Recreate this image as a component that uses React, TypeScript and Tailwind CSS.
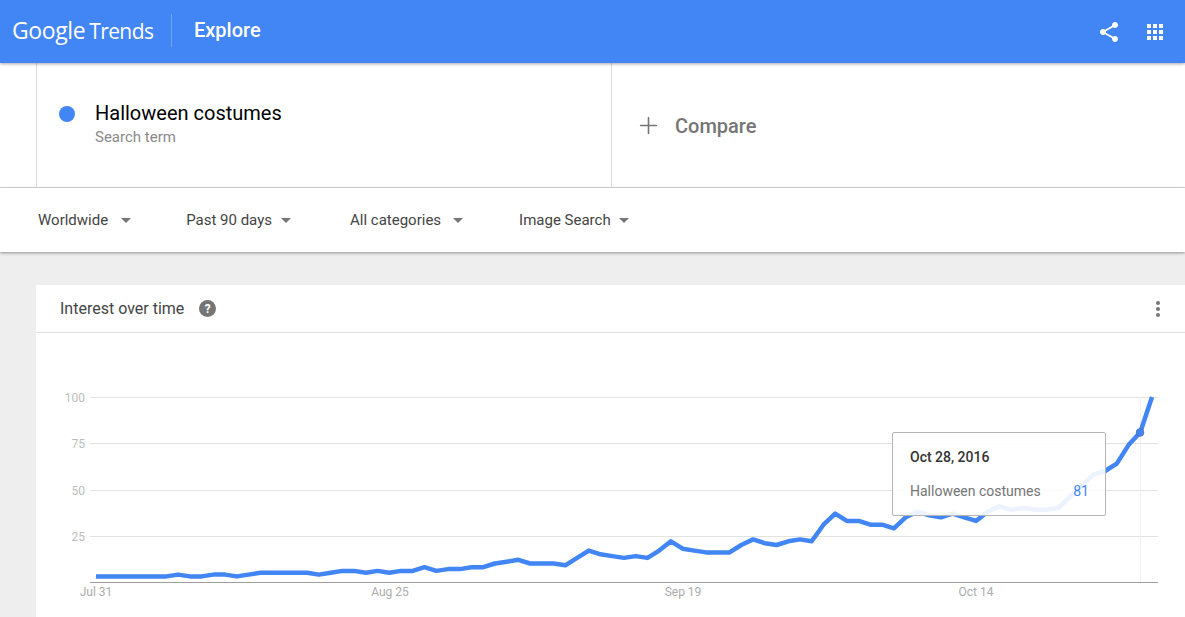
import { Plus } from "lucide-react";

const values = [
  3, 3, 3, 3, 3, 3, 3, 4, 3, 3, 4, 4, 3, 4, 5, 5, 5, 5, 5, 4, 5, 6, 6, 5, 6, 5, 6, 6, 8, 6, 7, 7, 8, 8, 10, 11, 12, 10,
  10, 10, 9, 13, 17, 15, 14, 13, 14, 13, 17, 22, 18, 17, 16, 16, 16, 20, 23, 21, 20, 22, 23, 22, 31, 37, 33, 33, 31,
  31, 29, 35, 38, 36, 35, 37, 35, 33, 38, 41, 39, 40, 39, 39, 40, 46, 52, 58, 60, 64, 74, 81, 100,
];

const points = values
  .map((v, i) => {
    const x = 96 + (i * 1056) / (values.length - 1);
    const y = 249 - v * 1.85;
    return `${x.toFixed(1)},${y.toFixed(1)}`;
  })
  .join(" ");

const grid = [
  { label: "100", y: 64 },
  { label: "75", y: 110 },
  { label: "50", y: 157 },
  { label: "25", y: 203 },
];

const dates = [
  { label: "Jul 31", x: 96 },
  { label: "Aug 25", x: 390 },
  { label: "Sep 19", x: 683 },
  { label: "Oct 14", x: 976 },
];

function Filter({ label, gap }: { label: string; gap: string }) {
  return (
    <div className={`flex items-center ${gap}`}>
      <span className="text-[15px] text-[#444444]">{label}</span>
      <span className="h-0 w-0 border-x-[5px] border-t-[5px] border-x-transparent border-t-[#757575]" />
    </div>
  );
}

export default function App() {
  return (
    <div className="h-[617px] overflow-hidden bg-[#eeeeee] font-['Roboto',sans-serif]">
      <header className="relative z-10 flex h-[63px] items-center bg-[#4285f4] pl-3 pr-[22px] text-white shadow-[0_1px_3px_rgba(0,0,0,0.35)]">
        <div className="flex w-[159px] -translate-y-px items-baseline">
          <span className="font-['Open_Sans',sans-serif] text-[23px] tracking-[-0.4px]">Google</span>
          <span className="ml-[4px] font-['Open_Sans',sans-serif] text-[21px] tracking-[-0.6px]">Trends</span>
        </div>
        <div className="h-[33px] w-px -translate-y-px bg-white/25" />
        <span className="mb-[3px] ml-[22px] text-[20px] font-medium">Explore</span>
        <div className="ml-auto flex items-center gap-[26px]">
          <svg width="24" height="24" viewBox="0 0 24 24" fill="white">
            <path d="M18 16.08c-.76 0-1.44.3-1.96.77L8.91 12.7c.05-.23.09-.46.09-.7s-.04-.47-.09-.7l7.05-4.11c.54.5 1.25.81 2.04.81 1.66 0 3-1.34 3-3s-1.34-3-3-3-3 1.34-3 3c0 .24.04.47.09.7L8.04 9.81C7.5 9.31 6.79 9 6 9c-1.66 0-3 1.34-3 3s1.34 3 3 3c.79 0 1.5-.31 2.04-.81l7.12 4.16c-.05.21-.08.43-.08.65 0 1.61 1.31 2.92 2.92 2.92s2.92-1.31 2.92-2.92-1.31-2.92-2.92-2.92z" />
          </svg>
          <div className="grid grid-cols-3 gap-[2px]">
            {Array.from({ length: 9 }).map((_, i) => (
              <span key={i} className="size-[4px] bg-white" />
            ))}
          </div>
        </div>
      </header>

      <section className="flex h-[125px] border-b border-[#d9d9d9] bg-white pl-[36px]">
        <div className="flex w-[576px] items-start border-x border-[#d9d9d9] pl-[22px] pt-[39px]">
          <span className="mt-[4px] size-4 rounded-full bg-[#4285f4]" />
          <div className="ml-[20px]">
            <div className="text-[20px] leading-[22px] text-black">Halloween costumes</div>
            <div className="mt-px text-[15px] leading-[24px] text-[#8a8a8a]">Search term</div>
          </div>
        </div>
        <div className="flex items-center pl-[23px] text-[#757575]">
          <Plus size={27} strokeWidth={1.4} />
          <span className="ml-[13px] mt-[2px] text-[20px] font-medium">Compare</span>
        </div>
      </section>

      <section className="flex h-[64px] items-center bg-white pl-[38px] shadow-[0_1px_3px_rgba(0,0,0,0.4)]">
        <Filter label="Worldwide" gap="gap-[13px]" />
        <div className="ml-[55px]">
          <Filter label="Past 90 days" gap="gap-[9px]" />
        </div>
        <div className="ml-[59px]">
          <Filter label="All categories" gap="gap-[12px]" />
        </div>
        <div className="ml-[56px]">
          <Filter label="Image Search" gap="gap-[8px]" />
        </div>
      </section>

      <section className="ml-[36px] mt-[33px] bg-white">
        <div className="flex h-[48px] items-center border-b border-[#e0e0e0] pl-[24px] pr-[25px]">
          <span className="text-[16px] text-[#444444]">Interest over time</span>
          <span className="ml-[15px] flex size-[17px] items-center justify-center rounded-full bg-[#757575] text-[12px] font-bold text-white">
            ?
          </span>
          <div className="ml-auto flex flex-col gap-[2px]">
            <span className="size-[4px] rounded-full bg-[#757575]" />
            <span className="size-[4px] rounded-full bg-[#757575]" />
            <span className="size-[4px] rounded-full bg-[#757575]" />
          </div>
        </div>

        <div className="relative -ml-[36px] h-[285px]">
          <svg width="1185" height="285" className="block">
            {grid.map((g) => (
              <g key={g.label}>
                <line x1="90" x2="1158" y1={g.y + 0.5} y2={g.y + 0.5} stroke="#e3e3e3" />
                <text x="85" y={g.y + 5} textAnchor="end" fontSize="12" fill="#bdbdbd">
                  {g.label}
                </text>
              </g>
            ))}
            <line x1="1140.5" x2="1140.5" y1="64" y2="249" stroke="#f1f1f1" />
            <line x1="90" x2="1158" y1="249.5" y2="249.5" stroke="#9e9e9e" />
            {dates.map((d) => (
              <text key={d.label} x={d.x} y="263" textAnchor="middle" fontSize="12" fill="#ababab">
                {d.label}
              </text>
            ))}
            <polyline points={points} fill="none" stroke="#4285f4" strokeWidth="4.5" strokeLinejoin="round" />
            <circle cx="1140" cy="99.5" r="4" fill="#4285f4" stroke="#555555" strokeOpacity="0.35" strokeWidth="1" />
          </svg>

          <div className="absolute left-[892px] top-[99px] h-[84px] w-[214px] rounded-[2px] border border-[#b5b5b5] bg-white/90 pl-[17px] pr-[16px] pt-[14px]">
            <div className="text-[14px] font-medium leading-[20px] text-[#333333]">Oct 28, 2016</div>
            <div className="mt-[14px] flex justify-between text-[14px] leading-[20px]">
              <span className="text-[#757575]">Halloween costumes</span>
              <span className="text-[#4285f4]">81</span>
            </div>
          </div>
        </div>
      </section>
    </div>
  );
}
